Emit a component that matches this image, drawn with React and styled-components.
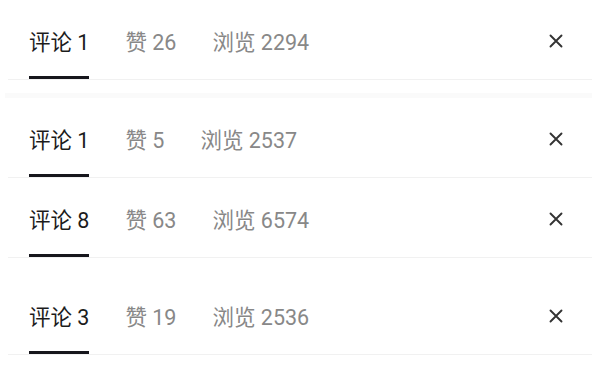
import React from "react";
import styled, { createGlobalStyle } from "styled-components";

const Global = createGlobalStyle`
  html, body { margin: 0; padding: 0; background: #fff; }
  body { font-family: Roboto, "Noto Sans CJK SC", sans-serif; }
`;

const Page = styled.div`
  width: 600px;
  height: 365px;
  overflow: hidden;
  display: flex;
  flex-direction: column;
  padding: 0 8px;
  box-sizing: border-box;
`;

const Panel = styled.div`
  height: 80px;
  margin-top: ${(p) => p.$gap}px;
  display: flex;
  align-items: stretch;
  border-bottom: 1px solid #f1f1f1;
  box-sizing: border-box;
  padding-left: 21px;
  padding-right: 26px;
  background: #fff;
`;

const Band = styled.div`
  height: ${(p) => p.$h}px;
  margin-top: ${(p) => p.$top}px;
  background: #fafafa;
  margin-left: -3px;
`;

const Tabs = styled.div`
  display: flex;
  gap: 36px;
  flex: 1;
`;

const Tab = styled.div`
  display: flex;
  align-items: center;
  box-sizing: border-box;
  padding-top: 4px;
  border-bottom: 3px solid ${(p) => (p.$active ? "#16161c" : "transparent")};
  font-size: 21.5px;
  font-weight: 400;
  color: ${(p) => (p.$active ? "#1c1c1c" : "#888")};
  white-space: nowrap;
`;

const Close = styled.button`
  align-self: center;
  margin-top: 2px;
  border: none;
  background: none;
  padding: 0;
  width: 20px;
  height: 20px;
  display: flex;
  align-items: center;
  justify-content: center;
  color: #333;
`;

const rows = [
  { c: 1, z: 26, v: 2294, gap: 0 },
  { c: 1, z: 5, v: 2537, gap: 0 },
  { c: 8, z: 63, v: 6574, gap: 0 },
  { c: 3, z: 19, v: 2536, gap: 17 },
];

function XIcon() {
  return (
    <svg width="16" height="16" viewBox="0 0 16 16">
      <path d="M2.5 2.5 L13.5 13.5 M13.5 2.5 L2.5 13.5" stroke="currentColor" strokeWidth="1.9" strokeLinecap="round" />
    </svg>
  );
}

export default function App() {
  return (
    <>
      <Global />
      <Page>
        {rows.map((r, i) => (
          <React.Fragment key={i}>
            {i === 1 && <Band $top={13} $h={5} />}
            <Panel $gap={r.gap}>
              <Tabs>
                <Tab $active>评论 {r.c}</Tab>
                <Tab>赞 {r.z}</Tab>
                <Tab>浏览 {r.v}</Tab>
              </Tabs>
              <Close aria-label="close">
                <XIcon />
              </Close>
            </Panel>
          </React.Fragment>
        ))}
      </Page>
    </>
  );
}
